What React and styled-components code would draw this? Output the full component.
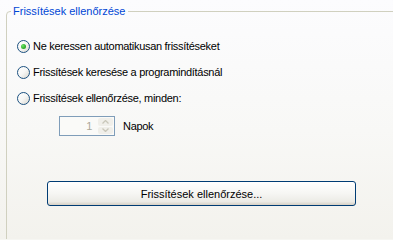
import styled, { createGlobalStyle } from "styled-components";

const GlobalStyle = createGlobalStyle`
  html, body {
    margin: 0;
    padding: 0;
    background: #f6f6f2;
  }
  * {
    box-sizing: border-box;
  }
`;

const Page = styled.div`
  width: 393px;
  height: 239px;
  overflow: hidden;
  padding: 5px 0 0 6px;
  background: linear-gradient(180deg, #fcfcfe 0%, #f8f8f6 55%, #f3f2ed 100%);
  font-family: "Liberation Sans", "DejaVu Sans", sans-serif;
  font-size: 11px;
  color: #000;
`;

// Group box: right and bottom edges fall outside the window
const GroupBox = styled.fieldset`
  margin: 0;
  padding: 0;
  width: 420px;
  height: 300px;
  border: 1px solid #d0d0bf;
  border-radius: 4px 0 0 0;
`;

const Legend = styled.legend`
  margin-left: 4px;
  padding: 0 2px;
  line-height: 13px;
  color: #0046d5;
`;

const OptionList = styled.div`
  display: flex;
  flex-direction: column;
  margin-top: 15px;
  padding-left: 10px;
`;

const OptionRow = styled.label`
  display: flex;
  align-items: center;
  gap: 3px;
  height: 26px;
  letter-spacing: -0.3px;
`;

const RadioCircle = styled.span`
  position: relative;
  width: 13px;
  height: 13px;
  border-radius: 50%;
  border: 1px solid #1c5180;
  background: linear-gradient(135deg, #ffffff 0%, #f7f7f5 50%, #d9d7cf 100%);
  flex-shrink: 0;

  &::after {
    content: "";
    display: ${({ $checked }) => ($checked ? "block" : "none")};
    position: absolute;
    left: 3px;
    top: 3px;
    width: 5px;
    height: 5px;
    border-radius: 50%;
    background: radial-gradient(circle at 35% 35%, #6fe36b 0%, #2fae2b 60%, #1f8f1c 100%);
  }
`;

const SpinRow = styled.div`
  display: flex;
  align-items: center;
  gap: 8px;
  height: 20px;
  margin-top: 5px;
  padding-left: 52px;
  letter-spacing: -0.3px;
`;

const SpinBox = styled.div`
  display: flex;
  align-items: stretch;
  width: 56px;
  height: 20px;
  border: 1px solid #7f9db9;
  background: #fafaf8;
  padding: 1px;
`;

const SpinValue = styled.span`
  flex: 1;
  text-align: right;
  padding-right: 6px;
  line-height: 16px;
  color: #aca899;
`;

const SpinButtons = styled.div`
  display: flex;
  flex-direction: column;
  width: 15px;
  gap: 1px;
`;

const SpinButton = styled.div`
  flex: 1;
  display: flex;
  align-items: center;
  justify-content: center;
  background: #f0efea;
  border-radius: 2px;
`;

const ActionButton = styled.button`
  display: block;
  margin: 45px 0 0 40px;
  width: 309px;
  height: 25px;
  padding: 0;
  border: 1px solid #003c74;
  border-radius: 3px;
  background: linear-gradient(180deg, #ffffff 0%, #f6f6f3 50%, #ecebe6 85%, #d6d0c5 100%);
  font-family: inherit;
  font-size: 11px;
  color: #000;
`;

function Arrow({ up }) {
  return (
    <svg width="7" height="4" viewBox="0 0 7 4">
      <path
        d={up ? "M0.5 3.5 L3.5 0.5 L6.5 3.5" : "M0.5 0.5 L3.5 3.5 L6.5 0.5"}
        fill="none"
        stroke="#c9c7ba"
        strokeWidth="1.3"
      />
    </svg>
  );
}

const options = [
  { label: "Ne keressen automatikusan frissítéseket", checked: true },
  { label: "Frissítések keresése a programindításnál", checked: false },
  { label: "Frissítések ellenőrzése, minden:", checked: false },
];

export default function App() {
  return (
    <>
      <GlobalStyle />
      <Page>
        <GroupBox>
          <Legend>Frissítések ellenőrzése</Legend>
          <OptionList>
            {options.map((opt) => (
              <OptionRow key={opt.label}>
                <RadioCircle $checked={opt.checked} />
                {opt.label}
              </OptionRow>
            ))}
          </OptionList>
          <SpinRow>
            <SpinBox>
              <SpinValue>1</SpinValue>
              <SpinButtons>
                <SpinButton>
                  <Arrow up />
                </SpinButton>
                <SpinButton>
                  <Arrow />
                </SpinButton>
              </SpinButtons>
            </SpinBox>
            Napok
          </SpinRow>
          <ActionButton>Frissítések ellenőrzése...</ActionButton>
        </GroupBox>
      </Page>
    </>
  );
}
